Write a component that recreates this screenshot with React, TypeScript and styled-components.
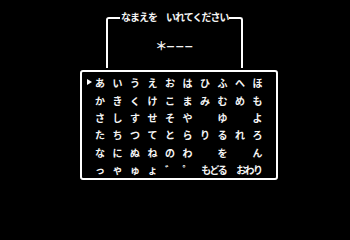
import React from "react";
import styled, { createGlobalStyle } from "styled-components";

const Global = createGlobalStyle`
  html, body { margin: 0; padding: 0; background: #000; }
  body { width: 350px; height: 200px; overflow: hidden; }
`;

const Screen = styled.div`
  width: 350px;
  height: 200px;
  background: #000;
  box-sizing: border-box;
  padding-top: 17px;
  display: flex;
  flex-direction: column;
  font-family: "Noto Sans CJK JP", "Noto Sans", sans-serif;
  font-weight: 700;
  color: #f4f4f4;
`;

const NameFrame = styled.div`
  position: relative;
  box-sizing: border-box;
  width: 137px;
  height: 51px;
  margin-left: 106px;
  border: 2px solid #fff;
  border-bottom: none;
  border-radius: 3px 3px 0 0;
  padding-top: 21px;
  display: flex;
  justify-content: center;
`;

const Title = styled.div`
  position: absolute;
  top: -8px;
  left: 12px;
  padding: 0 1px;
  background: #000;
  font-size: 10px;
  line-height: 12px;
  letter-spacing: -1px;
  white-space: nowrap;
`;

const NameText = styled.div`
  display: flex;
  align-items: center;
  height: 12px;
  font-size: 8.5px;
  line-height: 12px;
  letter-spacing: 0.6px;
  white-space: nowrap;
`;

const Star = styled.span`
  font-size: 12px;
  letter-spacing: -2px;
  margin-right: 1px;
`;

const KanaFrame = styled.div`
  box-sizing: border-box;
  width: 198px;
  height: 110px;
  margin-left: 80px;
  margin-top: 2px;
  border: 2px solid #fff;
  border-radius: 3px;
  padding: 2.3px 0 0 9.25px;
`;

const KanaGrid = styled.div`
  display: grid;
  grid-template-columns: repeat(10, 17.5px);
  grid-template-rows: repeat(6, 17.4px);
`;

const Cell = styled.div<{ $span?: number; $tight?: boolean }>`
  position: relative;
  grid-column: span ${(p) => p.$span ?? 1};
  display: flex;
  align-items: center;
  justify-content: center;
  font-size: 10px;
  line-height: 17.4px;
  letter-spacing: ${(p) => (p.$tight ? "-1.6px" : "0")};
  white-space: nowrap;
`;

const Cursor = styled.span`
  position: absolute;
  left: -4px;
  top: 50%;
  margin-top: -4px;
  width: 0;
  height: 0;
  border-top: 3.5px solid transparent;
  border-bottom: 3.5px solid transparent;
  border-left: 5px solid #fff;
`;

type Item = { t: string; span?: number };

const rows: Item[][] = [
  ["あ", "い", "う", "え", "お", "は", "ひ", "ふ", "へ", "ほ"].map((t) => ({ t })),
  ["か", "き", "く", "け", "こ", "ま", "み", "む", "め", "も"].map((t) => ({ t })),
  ["さ", "し", "す", "せ", "そ", "や", "", "ゆ", "", "よ"].map((t) => ({ t })),
  ["た", "ち", "つ", "て", "と", "ら", "り", "る", "れ", "ろ"].map((t) => ({ t })),
  ["な", "に", "ぬ", "ね", "の", "わ", "", "を", "", "ん"].map((t) => ({ t })),
  [
    ...["っ", "ゃ", "ゅ", "ょ", "゛", "゜"].map((t) => ({ t })),
    { t: "もどる", span: 2 },
    { t: "おわり", span: 2 },
  ],
];

export default function App() {
  return (
    <>
      <Global />
      <Screen>
        <NameFrame>
          <Title>なまえを　いれてください</Title>
          <NameText>
            <Star>＊</Star>ーーー
          </NameText>
        </NameFrame>
        <KanaFrame>
          <KanaGrid>
            {rows.map((row, r) =>
              row.map((item, c) => (
                <Cell key={`${r}-${c}`} $span={item.span} $tight={!!item.span}>
                  {r === 0 && c === 0 && <Cursor />}
                  {item.t}
                </Cell>
              ))
            )}
          </KanaGrid>
        </KanaFrame>
      </Screen>
    </>
  );
}
